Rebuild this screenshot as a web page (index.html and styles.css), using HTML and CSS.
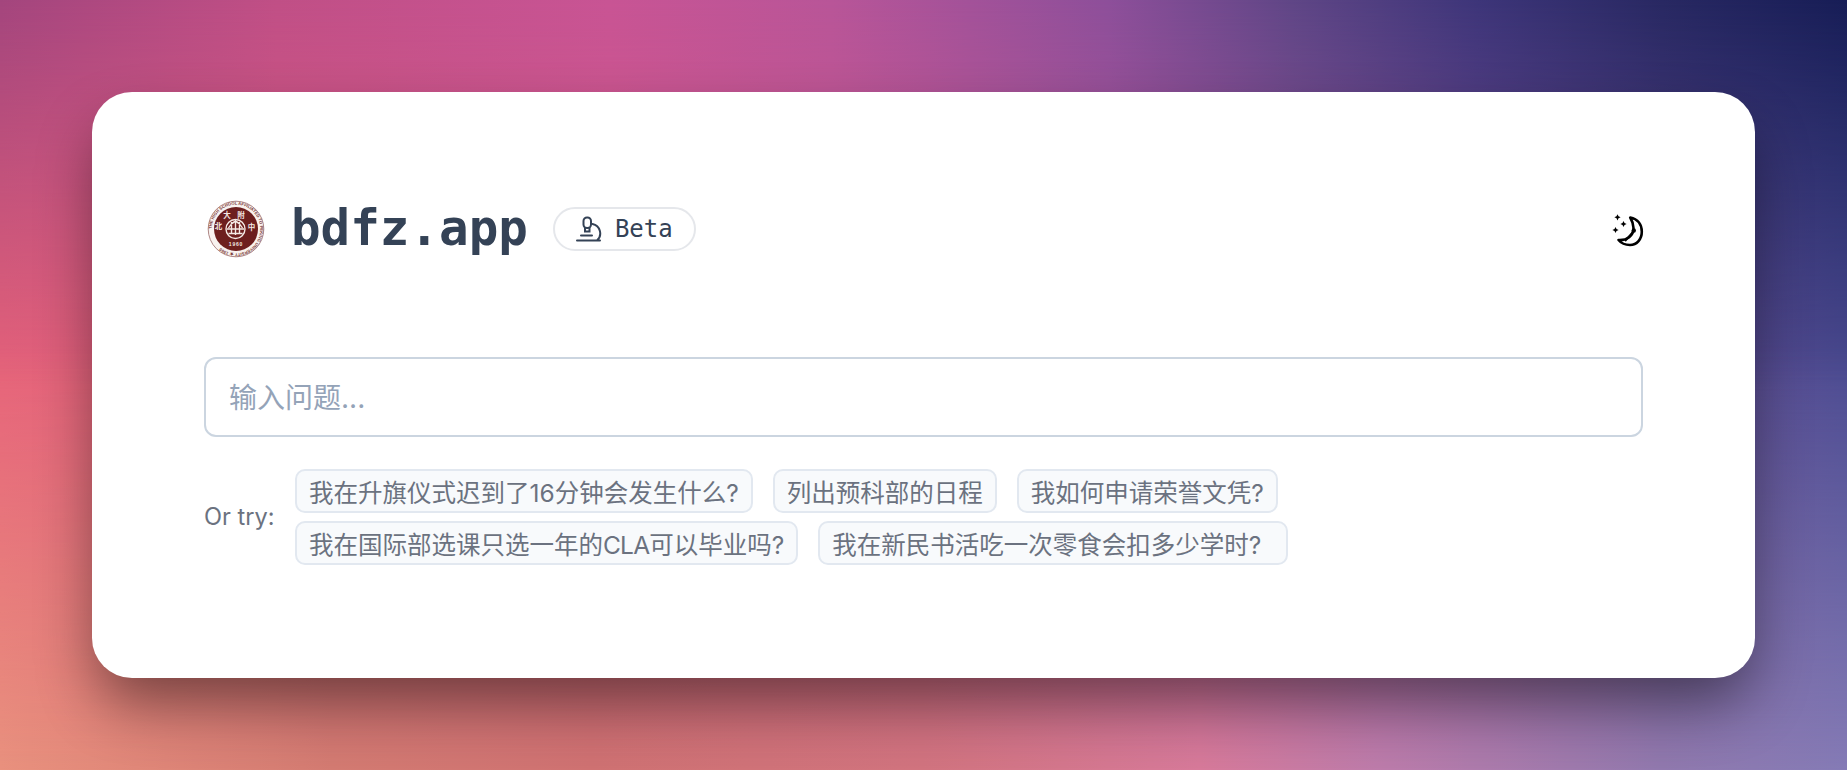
FILE: index.html
```html
<!DOCTYPE html>
<html lang="zh">
<head>
<meta charset="utf-8">
<title>bdfz.app</title>
<link rel="stylesheet" href="styles.css">
</head>
<body>
<main class="card">
  <header class="header">
    <div class="brand">
      <svg class="seal" viewBox="0 0 64 64" aria-hidden="true">
        <defs><path id="ring" d="M32 32m-24.300 0a24.300 24.300 0 1 1 48.600 0a24.300 24.300 0 1 1 -48.600 0"/></defs>
        <circle cx="32" cy="32" r="27.800" fill="#f8f2ef" stroke="#9a6a68" stroke-width=".8"/>
        <text class="seal-ring"><textPath href="#ring">THE HIGH SCHOOL AFFILIATED TO PEKING UNIVERSITY ★ 1960</textPath></text>
        <circle cx="32" cy="32" r="22" fill="#6d1f1e"/>
        <g class="seal-emblem">
          <circle cx="31.500" cy="32" r="9.500"/>
          <path d="M24.500 31c2-4 4-5.500 7-7 3 1.500 5 3 7 7M24.500 36.500h14M31.500 23v15M27.500 25v12M35.500 25v12M23 32h17"/>
        </g>
        <text class="seal-cn" x="14.500" y="32">北</text>
        <text class="seal-cn" x="23" y="21">大</text>
        <text class="seal-cn" x="37" y="21">附</text>
        <text class="seal-cn" x="47.500" y="33">中</text>
        <text class="seal-year" x="32" y="49">1960</text>
      </svg>
      <h1 class="title">bdfz.app</h1>
      <span class="badge">
        <svg class="scope" viewBox="0 0 26 26" aria-hidden="true">
          <rect x="7.500" y="1.500" width="7.500" height="10.500" rx="3.500"/>
          <path d="M9 12v3.500h4.500V12M16.500 8C24 9.500 27 19 21 24.500M1 24.500h23M5 19.500h11"/>
        </svg>
        <span class="badge-text">Beta</span>
      </span>
    </div>
    <svg class="moon" viewBox="0 0 30 30" aria-hidden="true">
      <path class="moon-shape" d="M17.200 1.500C25 3 28.800 9 28.800 15.700 28.800 23 24 29 17 29 12 29 8 27 5.500 24 14 24.500 20.500 20 20.500 12 20.500 8 19 4.500 17.200 1.500Z"/>
      <path class="moon-inner" d="M21 15L12 25"/>
      <circle class="moon-star" cx="20.800" cy="14.500" r="2.200"/>
      <path class="moon-star" d="M4.500-1.800L5.500.3 7.600 1.300 5.500 2.300 4.500 4.400 3.500 2.300 1.400 1.300 3.500.3zM10.500 4.900L11.500 7 13.600 8 11.500 9 10.500 11.100 9.500 9 7.400 8 9.500 7zM2.500 10.900L3.500 13 5.600 14 3.500 15 2.500 17.100 1.500 15-.6 14 1.500 13z"/>
    </svg>
  </header>

  <input class="ask" type="text" placeholder="输入问题...">

  <section class="try">
    <span class="try-label">Or try:</span>
    <div class="chips">
      <button class="chip" type="button">我在升旗仪式迟到了16分钟会发生什么?</button>
      <button class="chip" type="button">列出预科部的日程</button>
      <button class="chip" type="button">我如何申请荣誉文凭?</button>
      <button class="chip" type="button">我在国际部选课只选一年的<span class="latin-tight">CLA</span>可以毕业吗?</button>
      <button class="chip chip-trailing" type="button">我在新民书活吃一次零食会扣多少学时?</button>
    </div>
  </section>
</main>
</body>
</html>
```

FILE: styles.css
```css
* { box-sizing: border-box; }

html, body { height: 100%; }

body {
  position: relative;
  margin: 0;
  padding: 92px;
  overflow: hidden;
  font-family: Inter, "Noto Sans CJK SC", sans-serif;
  background: linear-gradient(90deg, #e9917e 0%, #d37b72 18%, #cf7272 32%, #d1747f 50%, #d77a9a 65%, #bc7cab 75%, #9179ae 90%, #857bb6 100%);
}

body::before,
body::after {
  content: "";
  position: absolute;
  inset: 0;
}

body::before {
  background: linear-gradient(90deg, #e6627a 0%, #d65a80 25%, #c9558c 50%, #a05296 68%, #6e4c92 85%, #4a4a90 100%);
  -webkit-mask-image: linear-gradient(180deg, #000 45%, transparent 100%);
  mask-image: linear-gradient(180deg, #000 45%, transparent 100%);
}

body::after {
  background: linear-gradient(90deg, #a3457d 0%, #c04f86 15%, #c85494 33%, #b85598 45%, #8d4f9a 60%, #5f4686 70%, #3d3579 80%, #282862 90%, #171d56 100%);
  -webkit-mask-image: linear-gradient(180deg, #000 0%, transparent 50%);
  mask-image: linear-gradient(180deg, #000 0%, transparent 50%);
}

.card {
  position: relative;
  z-index: 1;
  display: flex;
  flex-direction: column;
  height: 586px;
  padding: 112px 112px 0;
  background: #fff;
  border-radius: 40px;
  box-shadow: 0 30px 60px -6px rgba(0, 0, 0, .48);
}

.header {
  display: flex;
  align-items: center;
  justify-content: space-between;
  height: 50px;
}

.brand {
  display: flex;
  align-items: center;
}

.seal {
  width: 64px;
  height: 64px;
  margin-right: 23px;
  flex: none;
}

.seal-ring {
  font: 700 4.200px "Liberation Sans", sans-serif;
  fill: #7b3a38;
}

.seal-cn {
  font: 700 7.500px "Noto Sans CJK SC", sans-serif;
  fill: #f4e9e4;
  text-anchor: middle;
}

.seal-year {
  font: 700 5px "Liberation Sans", sans-serif;
  fill: #f4e9e4;
  text-anchor: middle;
  letter-spacing: .8px;
}

.seal-emblem {
  fill: none;
  stroke: #f4e9e4;
  stroke-width: 1.400;
}

.title {
  margin: 0 25px 0 0;
  font: 700 49.200px "DejaVu Sans Mono", monospace;
  color: #344256;
  line-height: 1;
}

.badge {
  display: flex;
  align-items: center;
  gap: 13px;
  width: 143px;
  height: 44px;
  padding-left: 21px;
  border: 2px solid #e5e7eb;
  border-radius: 22px;
}

.scope {
  width: 26px;
  height: 26px;
  fill: none;
  stroke: #344256;
  stroke-width: 2;
  stroke-linecap: round;
  flex: none;
}

.badge-text {
  font: 400 24px "DejaVu Sans Mono", monospace;
  color: #344256;
}

.moon {
  width: 30px;
  height: 30px;
  margin-top: 3px;
  overflow: visible;
  flex: none;
}

.moon-shape {
  fill: none;
  stroke: #000;
  stroke-width: 2.600;
  stroke-linejoin: round;
}

.moon-inner {
  fill: none;
  stroke: #000;
  stroke-width: 2;
}

.moon-star { fill: #000; }

.ask {
  display: block;
  width: 100%;
  height: 80px;
  margin-top: 103px;
  padding: 2px 23px 0;
  border: 2px solid #cbd5e0;
  border-radius: 12px;
  outline: none;
  font: 400 28px Inter, "Noto Sans CJK SC", sans-serif;
  color: #4a5568;
  background: #fff;
}

.ask::placeholder { color: #94a3b8; opacity: 1; }

.try {
  display: flex;
  align-items: center;
  margin-top: 32px;
}

.try-label {
  width: 91px;
  padding-bottom: 2px;
  font-size: 23.600px;
  color: #6b7280;
  flex: none;
}

.chips {
  display: flex;
  flex-wrap: wrap;
  gap: 8px 20px;
}

.chip {
  height: 44px;
  padding: 0 12px;
  border: 2px solid #e2e8f0;
  border-radius: 10px;
  background: #f8fafc;
  font: 400 24.500px Inter, "Noto Sans CJK SC", sans-serif;
  color: #6b7280;
  white-space: nowrap;
}

.chip-trailing { padding-right: 25px; }

.latin-tight { letter-spacing: -.8px; }
```
